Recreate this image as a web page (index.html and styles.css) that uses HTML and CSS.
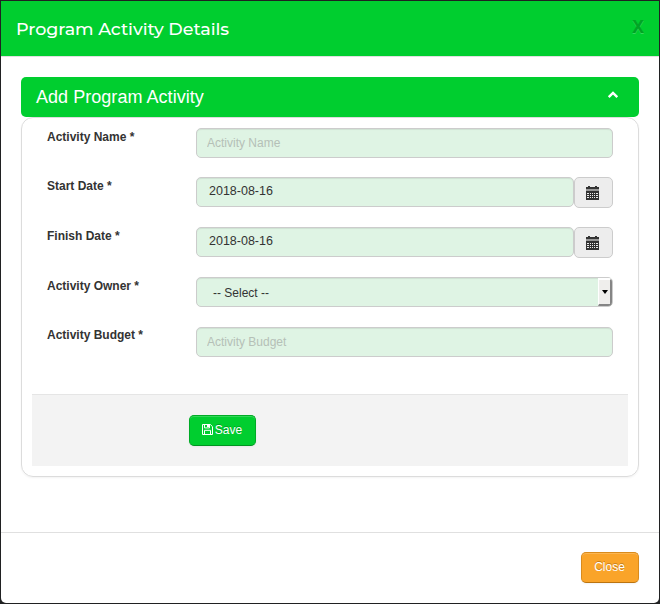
FILE: index.html
```html
<!DOCTYPE html>
<html lang="en">
<head>
<meta charset="utf-8">
<title>Program Activity Details</title>
<link rel="stylesheet" href="styles.css">
</head>
<body>
<svg width="0" height="0" class="sprite" aria-hidden="true">
  <symbol id="calendar" viewBox="0 0 13 15">
    <path fill="#333" fill-rule="evenodd" d="M2 1V0h2v1h5V0h2v1h2v2H0V1zM0 5h13v9H0zM1 7v1h2V7zm3 0v1h1V7zm2 0v1h1V7zm2 0v1h1V7zm2 0v1h2V7zM1 9v1h2V9zm3 0v1h1V9zm2 0v1h1V9zm2 0v1h1V9zm2 0v1h2V9zM1 11v1h2v-1zm3 0v1h1v-1zm2 0v1h1v-1zm2 0v1h1v-1zm2 0v1h2v-1z"/>
    <path fill="#999" d="M0 3h13v2H0z"/>
  </symbol>
</svg>
<div class="modal">
  <header class="modal-header">
    <h3 class="title">Program Activity Details</h3>
    <button class="dismiss">X</button>
  </header>
  <main class="modal-body">
    <div class="panel-head">
      <span>Add Program Activity</span>
      <svg class="chevron" width="12" height="8" viewBox="0 0 12 8"><path d="M1.7 6.2 6 2l4.3 4.2" fill="none" stroke="#fff" stroke-width="2.4"/></svg>
    </div>
    <form class="panel">
      <div class="row first"><label>Activity Name *</label><input class="field" placeholder="Activity Name"></div>
      <div class="row"><label>Start Date *</label><input class="field date" value="2018-08-16"><span class="addon"><svg width="13" height="15"><use href="#calendar"/></svg></span></div>
      <div class="row"><label>Finish Date *</label><input class="field date" value="2018-08-16"><span class="addon"><svg width="13" height="15"><use href="#calendar"/></svg></span></div>
      <div class="row"><label>Activity Owner *</label><div class="field select"><span>-- Select --</span><i class="drop"></i></div></div>
      <div class="row last"><label class="up">Activity Budget *</label><input class="field" placeholder="Activity Budget"></div>
      <div class="actions">
        <button type="button" class="btn save"><svg width="11" height="11" viewBox="0 0 11 11"><path d="M.5.5h7.8l2.2 2.2v7.8H.5zM2.5.5v3.4h5V.5M2.5 10.5V6.3h6v4.2" fill="none" stroke="#fff"/><path d="M5 1h2v2H5z" fill="#fff"/></svg>Save</button>
      </div>
    </form>
  </main>
  <footer class="modal-footer"><button class="btn close">Close</button></footer>
</div>
</body>
</html>
```
FILE: styles.css
```css
* { box-sizing: border-box; }
body {
  margin: 0;
  padding: 1px;
  height: 604px;
  overflow: hidden;
  background: #202122;
  color: #333;
  font: 12px/20px "Liberation Sans", Arial, sans-serif;
}
button, input { font: inherit; margin: 0; }
.sprite { position: absolute; }
.modal {
  display: flex;
  flex-direction: column;
  height: 602px;
  background: #fff;
  border-radius: 0 0 5px 5px;
  overflow: hidden;
}
.modal-header {
  display: flex;
  justify-content: space-between;
  height: 56px;
  padding: 12px 15px 0;
  background: #00ce2f;
  border-bottom: 1px solid #e0e0e0;
}
.title {
  margin: 0;
  color: #fff;
  font: 500 17.5px/32px Montserrat, Inter, sans-serif;
  letter-spacing: -0.05px;
}
.dismiss {
  height: 26px;
  padding: 0;
  border: 0;
  background: none;
  color: #00a525;
  font: bold 17.5px/27px "Noto Sans", "Open Sans", sans-serif;
  text-shadow: 0 1px 0 #33d859;
}
.modal-body { flex: 1; padding: 20px; }
.panel-head {
  display: flex;
  justify-content: space-between;
  height: 40px;
  padding: 0 20px 0 15px;
  border-radius: 5px;
  background: #00ce2f;
  color: #fff;
  font-size: 18px;
  line-height: 40px;
  letter-spacing: 0.04px;
}
.chevron { margin-top: 14px; }
.panel {
  height: 360px;
  padding: 10px;
  border: 1px solid #dcdcdc;
  border-radius: 12px;
  box-shadow: 0 1px 2px rgba(0, 0, 0, 0.05);
}
.row {
  display: flex;
  align-items: flex-start;
  height: 50px;
  padding: 0 15px;
}
.row.first { height: 49px; }
.row.last { height: 67px; }
.row label { width: 149px; font-weight: bold; line-height: 18px; }
.row .up { margin-top: -1px; }
.field {
  flex: 1;
  min-width: 0;
  height: 30px;
  padding: 4px 10px;
  border: 1px solid #ccc;
  border-radius: 5px;
  background: #dff4e4;
  color: #333;
  box-shadow: inset 0 1px 1px rgba(0, 0, 0, 0.075);
}
.field::placeholder { color: #b5c0b7; opacity: 1; }
.date { padding: 3px 12px 5px; font-size: 12.5px; }
.addon {
  display: flex;
  align-items: center;
  justify-content: center;
  width: 39px;
  height: 31px;
  padding: 2px 3px 0 0;
  border: 1px solid #ccc;
  border-radius: 5px;
  background: #ededed;
}
.select {
  display: flex;
  justify-content: space-between;
  padding: 0 0 0 16px;
  line-height: 30px;
  overflow: hidden;
}
.drop {
  display: flex;
  align-items: center;
  justify-content: center;
  width: 14px;
  height: 28px;
  background: #efeeec;
  border: solid;
  border-width: 2px 2px 2px 1px;
  border-color: #fff #858585 #858585 #fff;
}
.drop::after {
  content: "";
  border: 3px solid transparent;
  border-top: 4px solid #000;
  border-bottom: 0;
}
.actions {
  height: 72px;
  padding: 20px 0 0 157px;
  border-top: 1px solid #e5e5e5;
  background: #f3f3f3;
}
.btn {
  display: flex;
  align-items: center;
  justify-content: center;
  height: 31px;
  padding: 0 1px 2px 0;
  border: 1px solid;
  border-radius: 5px;
  color: #fff;
  text-shadow: 0 -1px 0 rgba(0, 0, 0, 0.25);
  box-shadow: inset 0 1px 0 rgba(255, 255, 255, 0.2), 0 1px 2px rgba(0, 0, 0, 0.05);
}
.save { gap: 2px; width: 67px; background: #00ce2f; border-color: #00ab26 #00ab26 #009421; }
.close { width: 58px; background: #faa429; border-color: #d98b1c #d98b1c #bb7410; }
.modal-footer {
  display: flex;
  justify-content: flex-end;
  height: 71px;
  padding: 19px 20px 0;
  border-top: 1px solid #e0e0e0;
}
```
